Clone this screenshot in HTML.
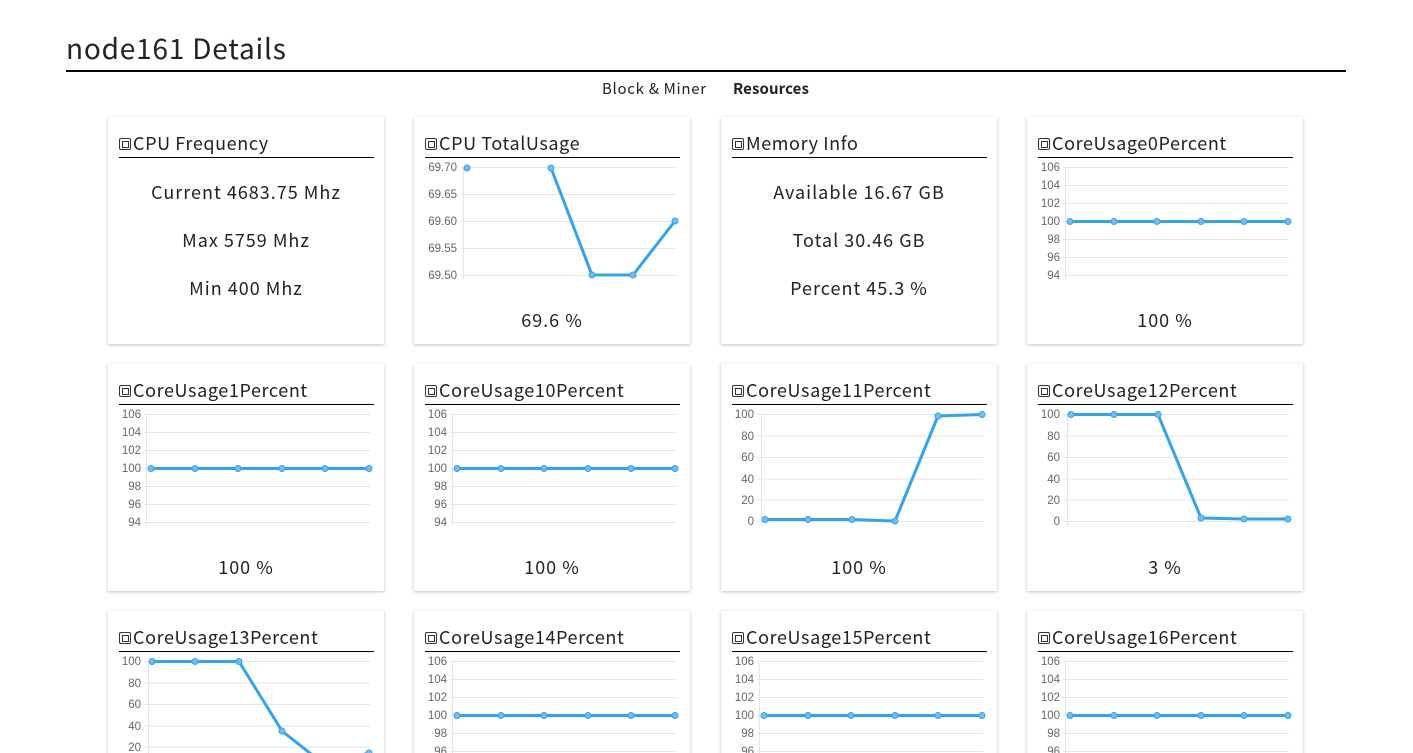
<!DOCTYPE html>
<html><head><meta charset="utf-8"><style>
*{margin:0;padding:0;box-sizing:border-box}
html,body{width:1413px;height:753px;overflow:hidden}
body{background:#fff;font-family:"Noto Sans CJK KR","Liberation Sans",sans-serif;color:#222;position:relative}
h1{position:absolute;left:66px;top:28px;font-size:28px;font-weight:400;line-height:40px;letter-spacing:0.8px}
.hr{position:absolute;left:66px;top:70px;width:1280px;height:2px;background:#000}
.tab{position:absolute;top:78px;font-size:15px;line-height:22px;letter-spacing:0.7px}
.card{position:absolute;width:276px;height:227px;background:#fff;box-shadow:0 1px 3px rgba(0,0,0,.25)}
.t{position:absolute;left:11px;top:13px;width:255px;height:28px;border-bottom:1px solid #000;font-size:18px;line-height:26px;white-space:nowrap;letter-spacing:0.6px}
.t i{display:inline-block;width:12px;height:12px;border:1.5px solid #333;border-radius:2px;margin-right:2px;vertical-align:-0px;position:relative}
.t i:after{content:"";position:absolute;left:2px;top:2px;width:5px;height:5px;border:1px solid #333}
.v{position:absolute;left:0;width:276px;text-align:center;font-size:18px;line-height:24px;letter-spacing:1px}
svg{position:absolute;left:0;top:0}
svg text{font-family:"Liberation Sans",sans-serif;font-size:11.5px;fill:#666}
</style></head><body>
<h1>node161 Details</h1>
<div class="hr"></div>
<div class="tab" style="left:602px">Block &amp; Miner</div>
<div class="tab" style="left:733px;font-weight:700;letter-spacing:0.1px">Resources</div>

<!-- Row 1 -->
<div class="card" style="left:108px;top:117px">
<div class="t"><i></i>CPU Frequency</div>
<div class="v" style="top:63px">Current 4683.75 Mhz</div>
<div class="v" style="top:111px">Max 5759 Mhz</div>
<div class="v" style="top:159px">Min 400 Mhz</div>
</div>

<div class="card" style="left:414px;top:117px">
<div class="t"><i></i>CPU TotalUsage</div>
<svg width="276" height="227">
<g stroke="#e5e5e5" stroke-width="1"><line x1="47" x2="262" y1="50.5" y2="50.5"/><line x1="47" x2="262" y1="77.5" y2="77.5"/><line x1="47" x2="262" y1="104.5" y2="104.5"/><line x1="47" x2="262" y1="131.5" y2="131.5"/><line x1="47" x2="262" y1="158.5" y2="158.5"/><line x1="49.5" x2="49.5" y1="50" y2="162"/></g>
<g text-anchor="end"><text x="43" y="54">69.70</text><text x="43" y="81">69.65</text><text x="43" y="108">69.60</text><text x="43" y="135">69.55</text><text x="43" y="162">69.50</text></g>
<polyline points="137,51 178,158 219,158 261,104" fill="none" stroke="#36a2eb" stroke-width="3"/>
<g fill="#74bdf0" stroke="#36a2eb"><circle cx="53" cy="51" r="3"/><circle cx="137" cy="51" r="3"/><circle cx="178" cy="158" r="3"/><circle cx="219" cy="158" r="3"/><circle cx="261" cy="104" r="3"/></g>
</svg>
<div class="v" style="top:191px">69.6 %</div>
</div>

<div class="card" style="left:721px;top:117px">
<div class="t"><i></i>Memory Info</div>
<div class="v" style="top:63px">Available 16.67 GB</div>
<div class="v" style="top:111px">Total 30.46 GB</div>
<div class="v" style="top:159px">Percent 45.3 %</div>
</div>

<div class="card" style="left:1027px;top:117px">
<div class="t"><i></i>CoreUsage0Percent</div>
<svg width="276" height="227">
<g stroke="#e5e5e5"><line x1="36" x2="262" y1="50.5" y2="50.5"/><line x1="36" x2="262" y1="68.5" y2="68.5"/><line x1="36" x2="262" y1="86.5" y2="86.5"/><line x1="36" x2="262" y1="104.5" y2="104.5"/><line x1="36" x2="262" y1="122.5" y2="122.5"/><line x1="36" x2="262" y1="140.5" y2="140.5"/><line x1="36" x2="262" y1="158.5" y2="158.5"/><line x1="38.5" x2="38.5" y1="50" y2="162"/></g>
<g text-anchor="end"><text x="33" y="54">106</text><text x="33" y="72">104</text><text x="33" y="90">102</text><text x="33" y="108">100</text><text x="33" y="126">98</text><text x="33" y="144">96</text><text x="33" y="162">94</text></g>
<line x1="43" x2="261" y1="104.5" y2="104.5" stroke="#36a2eb" stroke-width="3"/>
<g fill="#74bdf0" stroke="#36a2eb"><circle cx="43" cy="104.5" r="3"/><circle cx="87" cy="104.5" r="3"/><circle cx="130" cy="104.5" r="3"/><circle cx="174" cy="104.5" r="3"/><circle cx="217" cy="104.5" r="3"/><circle cx="261" cy="104.5" r="3"/></g>
</svg>
<div class="v" style="top:191px">100 %</div>
</div>

<!-- Row 2 -->
<div class="card" style="left:108px;top:364px">
<div class="t"><i></i>CoreUsage1Percent</div>
<svg width="276" height="227">
<g stroke="#e5e5e5"><line x1="36" x2="262" y1="50.5" y2="50.5"/><line x1="36" x2="262" y1="68.5" y2="68.5"/><line x1="36" x2="262" y1="86.5" y2="86.5"/><line x1="36" x2="262" y1="104.5" y2="104.5"/><line x1="36" x2="262" y1="122.5" y2="122.5"/><line x1="36" x2="262" y1="140.5" y2="140.5"/><line x1="36" x2="262" y1="158.5" y2="158.5"/><line x1="38.5" x2="38.5" y1="50" y2="162"/></g>
<g text-anchor="end"><text x="33" y="54">106</text><text x="33" y="72">104</text><text x="33" y="90">102</text><text x="33" y="108">100</text><text x="33" y="126">98</text><text x="33" y="144">96</text><text x="33" y="162">94</text></g>
<line x1="43" x2="261" y1="104.5" y2="104.5" stroke="#36a2eb" stroke-width="3"/>
<g fill="#74bdf0" stroke="#36a2eb"><circle cx="43" cy="104.5" r="3"/><circle cx="87" cy="104.5" r="3"/><circle cx="130" cy="104.5" r="3"/><circle cx="174" cy="104.5" r="3"/><circle cx="217" cy="104.5" r="3"/><circle cx="261" cy="104.5" r="3"/></g>
</svg>
<div class="v" style="top:191px">100 %</div>
</div>

<div class="card" style="left:414px;top:364px">
<div class="t"><i></i>CoreUsage10Percent</div>
<svg width="276" height="227">
<g stroke="#e5e5e5"><line x1="36" x2="262" y1="50.5" y2="50.5"/><line x1="36" x2="262" y1="68.5" y2="68.5"/><line x1="36" x2="262" y1="86.5" y2="86.5"/><line x1="36" x2="262" y1="104.5" y2="104.5"/><line x1="36" x2="262" y1="122.5" y2="122.5"/><line x1="36" x2="262" y1="140.5" y2="140.5"/><line x1="36" x2="262" y1="158.5" y2="158.5"/><line x1="38.5" x2="38.5" y1="50" y2="162"/></g>
<g text-anchor="end"><text x="33" y="54">106</text><text x="33" y="72">104</text><text x="33" y="90">102</text><text x="33" y="108">100</text><text x="33" y="126">98</text><text x="33" y="144">96</text><text x="33" y="162">94</text></g>
<line x1="43" x2="261" y1="104.5" y2="104.5" stroke="#36a2eb" stroke-width="3"/>
<g fill="#74bdf0" stroke="#36a2eb"><circle cx="43" cy="104.5" r="3"/><circle cx="87" cy="104.5" r="3"/><circle cx="130" cy="104.5" r="3"/><circle cx="174" cy="104.5" r="3"/><circle cx="217" cy="104.5" r="3"/><circle cx="261" cy="104.5" r="3"/></g>
</svg>
<div class="v" style="top:191px">100 %</div>
</div>

<div class="card" style="left:721px;top:364px">
<div class="t"><i></i>CoreUsage11Percent</div>
<svg width="276" height="227">
<g stroke="#e5e5e5"><line x1="36" x2="262" y1="50.5" y2="50.5"/><line x1="36" x2="262" y1="72" y2="72"/><line x1="36" x2="262" y1="93.5" y2="93.5"/><line x1="36" x2="262" y1="115" y2="115"/><line x1="36" x2="262" y1="136" y2="136"/><line x1="36" x2="262" y1="157.5" y2="157.5"/><line x1="40.5" x2="40.5" y1="50" y2="162"/></g>
<g text-anchor="end"><text x="33" y="54">100</text><text x="33" y="76">80</text><text x="33" y="97">60</text><text x="33" y="119">40</text><text x="33" y="140">20</text><text x="33" y="161">0</text></g>
<polyline points="44,155.5 87,155.5 131,155.5 174,157 217,52 261,50.5" fill="none" stroke="#36a2eb" stroke-width="3"/>
<g fill="#74bdf0" stroke="#36a2eb"><circle cx="44" cy="155.5" r="3"/><circle cx="87" cy="155.5" r="3"/><circle cx="131" cy="155.5" r="3"/><circle cx="174" cy="157" r="3"/><circle cx="217" cy="52" r="3"/><circle cx="261" cy="50.5" r="3"/></g>
</svg>
<div class="v" style="top:191px">100 %</div>
</div>

<div class="card" style="left:1027px;top:364px">
<div class="t"><i></i>CoreUsage12Percent</div>
<svg width="276" height="227">
<g stroke="#e5e5e5"><line x1="36" x2="262" y1="50.5" y2="50.5"/><line x1="36" x2="262" y1="72" y2="72"/><line x1="36" x2="262" y1="93.5" y2="93.5"/><line x1="36" x2="262" y1="115" y2="115"/><line x1="36" x2="262" y1="136" y2="136"/><line x1="36" x2="262" y1="157.5" y2="157.5"/><line x1="40.5" x2="40.5" y1="50" y2="162"/></g>
<g text-anchor="end"><text x="33" y="54">100</text><text x="33" y="76">80</text><text x="33" y="97">60</text><text x="33" y="119">40</text><text x="33" y="140">20</text><text x="33" y="161">0</text></g>
<polyline points="44,50.5 87,50.5 131,50.5 174,154 217,155 261,155" fill="none" stroke="#36a2eb" stroke-width="3"/>
<g fill="#74bdf0" stroke="#36a2eb"><circle cx="44" cy="50.5" r="3"/><circle cx="87" cy="50.5" r="3"/><circle cx="131" cy="50.5" r="3"/><circle cx="174" cy="154" r="3"/><circle cx="217" cy="155" r="3"/><circle cx="261" cy="155" r="3"/></g>
</svg>
<div class="v" style="top:191px">3 %</div>
</div>

<!-- Row 3 -->
<div class="card" style="left:108px;top:611px">
<div class="t"><i></i>CoreUsage13Percent</div>
<svg width="276" height="227">
<g stroke="#e5e5e5"><line x1="36" x2="262" y1="50.5" y2="50.5"/><line x1="36" x2="262" y1="72" y2="72"/><line x1="36" x2="262" y1="93.5" y2="93.5"/><line x1="36" x2="262" y1="115" y2="115"/><line x1="36" x2="262" y1="136" y2="136"/><line x1="36" x2="262" y1="157.5" y2="157.5"/><line x1="40.5" x2="40.5" y1="50" y2="162"/></g>
<g text-anchor="end"><text x="33" y="54">100</text><text x="33" y="76">80</text><text x="33" y="97">60</text><text x="33" y="119">40</text><text x="33" y="140">20</text><text x="33" y="161">0</text></g>
<polyline points="44,50.5 87,50.5 131,50.5 174,120 217,154 261,142" fill="none" stroke="#36a2eb" stroke-width="3"/>
<g fill="#74bdf0" stroke="#36a2eb"><circle cx="44" cy="50.5" r="3"/><circle cx="87" cy="50.5" r="3"/><circle cx="131" cy="50.5" r="3"/><circle cx="174" cy="120" r="3"/><circle cx="217" cy="154" r="3"/><circle cx="261" cy="142" r="3"/></g>
</svg>
</div>

<div class="card" style="left:414px;top:611px">
<div class="t"><i></i>CoreUsage14Percent</div>
<svg width="276" height="227">
<g stroke="#e5e5e5"><line x1="36" x2="262" y1="50.5" y2="50.5"/><line x1="36" x2="262" y1="68.5" y2="68.5"/><line x1="36" x2="262" y1="86.5" y2="86.5"/><line x1="36" x2="262" y1="104.5" y2="104.5"/><line x1="36" x2="262" y1="122.5" y2="122.5"/><line x1="36" x2="262" y1="140.5" y2="140.5"/><line x1="38.5" x2="38.5" y1="50" y2="162"/></g>
<g text-anchor="end"><text x="33" y="54">106</text><text x="33" y="72">104</text><text x="33" y="90">102</text><text x="33" y="108">100</text><text x="33" y="126">98</text><text x="33" y="144">96</text></g>
<line x1="43" x2="261" y1="104.5" y2="104.5" stroke="#36a2eb" stroke-width="3"/>
<g fill="#74bdf0" stroke="#36a2eb"><circle cx="43" cy="104.5" r="3"/><circle cx="87" cy="104.5" r="3"/><circle cx="130" cy="104.5" r="3"/><circle cx="174" cy="104.5" r="3"/><circle cx="217" cy="104.5" r="3"/><circle cx="261" cy="104.5" r="3"/></g>
</svg>
</div>

<div class="card" style="left:721px;top:611px">
<div class="t"><i></i>CoreUsage15Percent</div>
<svg width="276" height="227">
<g stroke="#e5e5e5"><line x1="36" x2="262" y1="50.5" y2="50.5"/><line x1="36" x2="262" y1="68.5" y2="68.5"/><line x1="36" x2="262" y1="86.5" y2="86.5"/><line x1="36" x2="262" y1="104.5" y2="104.5"/><line x1="36" x2="262" y1="122.5" y2="122.5"/><line x1="36" x2="262" y1="140.5" y2="140.5"/><line x1="38.5" x2="38.5" y1="50" y2="162"/></g>
<g text-anchor="end"><text x="33" y="54">106</text><text x="33" y="72">104</text><text x="33" y="90">102</text><text x="33" y="108">100</text><text x="33" y="126">98</text><text x="33" y="144">96</text></g>
<line x1="43" x2="261" y1="104.5" y2="104.5" stroke="#36a2eb" stroke-width="3"/>
<g fill="#74bdf0" stroke="#36a2eb"><circle cx="43" cy="104.5" r="3"/><circle cx="87" cy="104.5" r="3"/><circle cx="130" cy="104.5" r="3"/><circle cx="174" cy="104.5" r="3"/><circle cx="217" cy="104.5" r="3"/><circle cx="261" cy="104.5" r="3"/></g>
</svg>
</div>

<div class="card" style="left:1027px;top:611px">
<div class="t"><i></i>CoreUsage16Percent</div>
<svg width="276" height="227">
<g stroke="#e5e5e5"><line x1="36" x2="262" y1="50.5" y2="50.5"/><line x1="36" x2="262" y1="68.5" y2="68.5"/><line x1="36" x2="262" y1="86.5" y2="86.5"/><line x1="36" x2="262" y1="104.5" y2="104.5"/><line x1="36" x2="262" y1="122.5" y2="122.5"/><line x1="36" x2="262" y1="140.5" y2="140.5"/><line x1="38.5" x2="38.5" y1="50" y2="162"/></g>
<g text-anchor="end"><text x="33" y="54">106</text><text x="33" y="72">104</text><text x="33" y="90">102</text><text x="33" y="108">100</text><text x="33" y="126">98</text><text x="33" y="144">96</text></g>
<line x1="43" x2="261" y1="104.5" y2="104.5" stroke="#36a2eb" stroke-width="3"/>
<g fill="#74bdf0" stroke="#36a2eb"><circle cx="43" cy="104.5" r="3"/><circle cx="87" cy="104.5" r="3"/><circle cx="130" cy="104.5" r="3"/><circle cx="174" cy="104.5" r="3"/><circle cx="217" cy="104.5" r="3"/><circle cx="261" cy="104.5" r="3"/></g>
</svg>
</div>
</body></html>
